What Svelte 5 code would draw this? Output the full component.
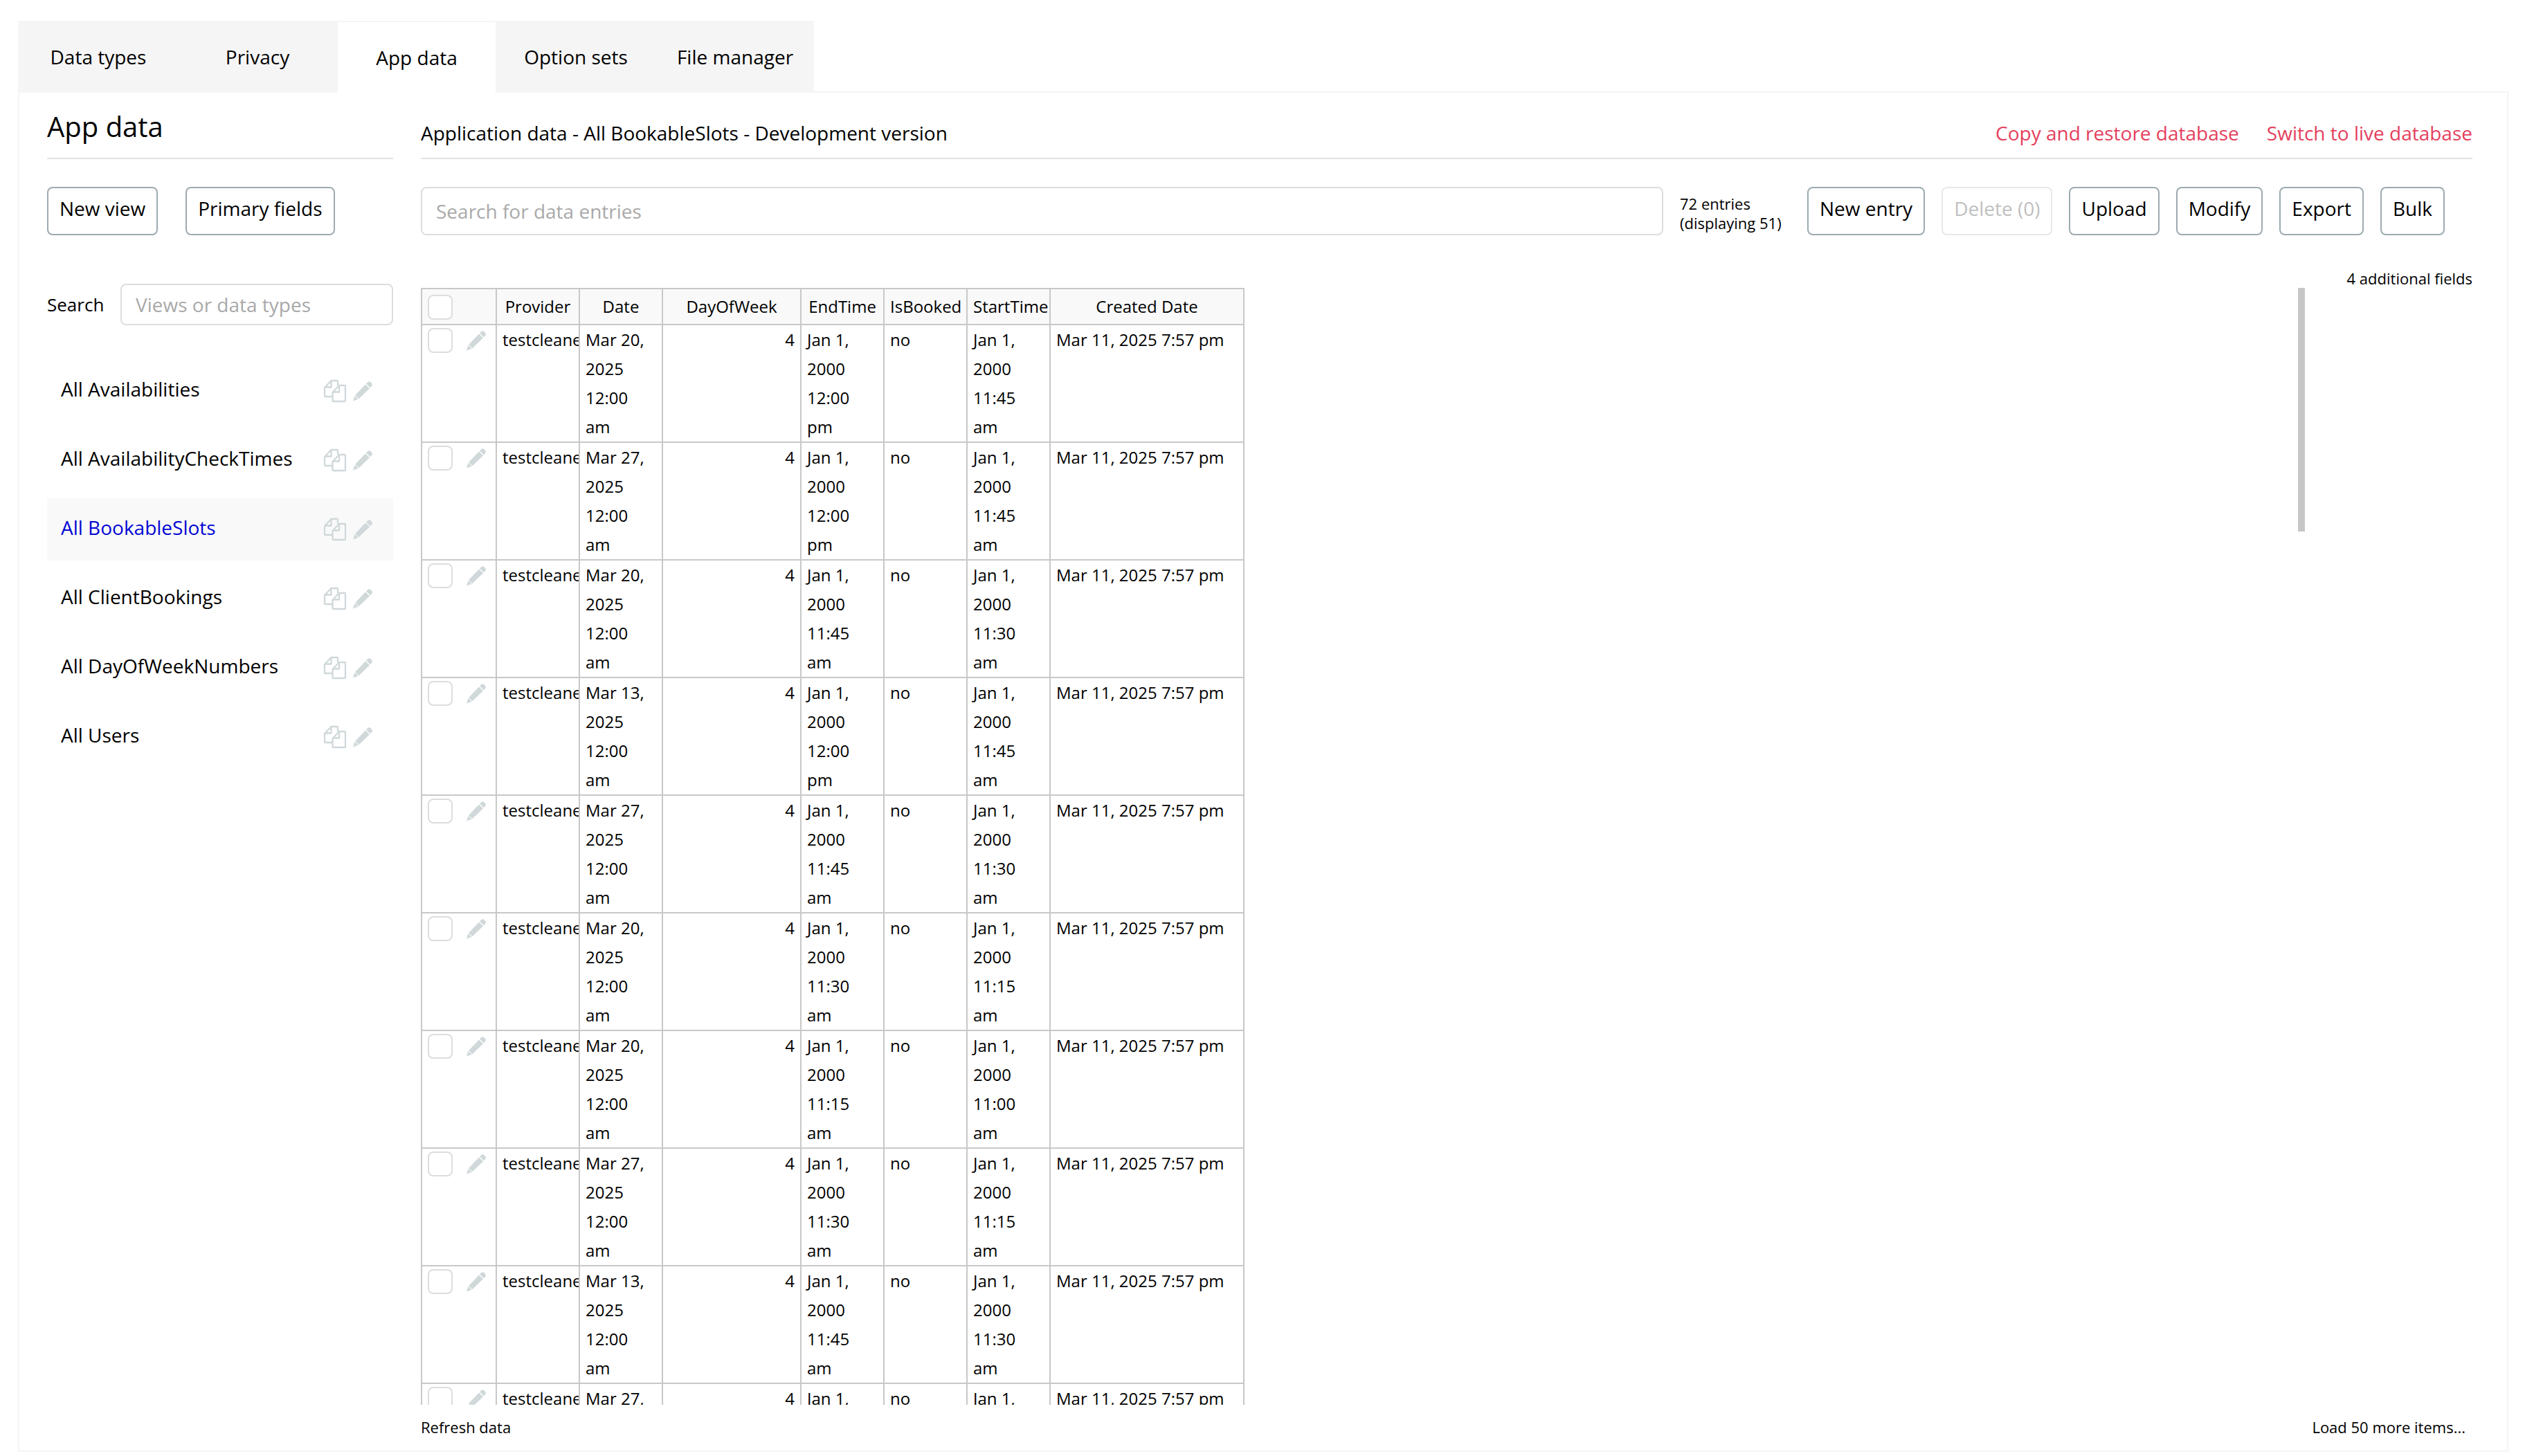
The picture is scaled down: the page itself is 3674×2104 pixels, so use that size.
<script>
  const tabs = ['Data types', 'Privacy', 'App data', 'Option sets', 'File manager'];
  const views = [
    'All Availabilities',
    'All AvailabilityCheckTimes',
    'All BookableSlots',
    'All ClientBookings',
    'All DayOfWeekNumbers',
    'All Users'
  ];
  const columns = [
    { name: 'Provider', size: 'narrow' },
    { name: 'Date', size: 'narrow' },
    { name: 'DayOfWeek', size: 'medium' },
    { name: 'EndTime', size: 'narrow' },
    { name: 'IsBooked', size: 'narrow' },
    { name: 'StartTime', size: 'narrow' },
    { name: 'Created Date', size: 'wide' }
  ];
  const actions = ['New entry', 'Delete (0)', 'Upload', 'Modify', 'Export', 'Bulk'];
  const slots = [
    ['20', '12:00 pm', '11:45 am'],
    ['27', '12:00 pm', '11:45 am'],
    ['20', '11:45 am', '11:30 am'],
    ['13', '12:00 pm', '11:45 am'],
    ['27', '11:45 am', '11:30 am'],
    ['20', '11:30 am', '11:15 am'],
    ['20', '11:15 am', '11:00 am'],
    ['27', '11:30 am', '11:15 am'],
    ['13', '11:45 am', '11:30 am'],
    ['27', '11:15 am', '11:00 am']
  ];
  let activeTab = $state('App data');
  let activeView = $state('All BookableSlots');
</script>

{#snippet pencil()}
  <svg class="pencil" viewBox="0 0 28 28" aria-hidden="true">
    <path d="M3.2 20 18 4.400 24 10.200 8.400 25.200Z" />
    <path d="M19 3.500 21.400 1.100Q23.400-.6 25.200 1.100L27.200 3.100Q28.800 5 27.200 6.800L24.900 9.200Z" />
    <path d="M2.600 20.800 7.600 25.800 0 28.400Z" />
  </svg>
{/snippet}

{#snippet copy()}
  <svg class="copy" viewBox="0 0 32 32" aria-hidden="true">
    <path d="M12 24H2Q1 24 1 23V11L10.500 1H19Q20 1 20 2V8M10.500 1V10.500H1" />
    <path d="M12.500 18 22 8H30Q31 8 31 9V30Q31 31 30 31H13.500Q12.500 31 12.500 30ZM22 8V17.500H12.500" />
  </svg>
{/snippet}

<div class="page">
  <nav class="tabs">
    {#each tabs as tab}
      <button class="tab" class:active={tab === activeTab} onclick={() => (activeTab = tab)}>{tab}</button>
    {/each}
  </nav>

  <div class="panel">
    <aside class="sidebar">
      <header class="heading"><h1>App data</h1></header>
      <div class="side-buttons">
        <button class="btn">New view</button>
        <button class="btn">Primary fields</button>
      </div>
      <div class="filter">
        <label for="view-search">Search</label>
        <input id="view-search" class="field" type="text" placeholder="Views or data types" />
      </div>
      <ul class="views">
        {#each views as view}
          <li class:selected={view === activeView}>
            <button class="view-name" onclick={() => (activeView = view)}>{view}</button>
            <button class="icon" aria-label="Copy {view}">{@render copy()}</button>
            <button class="icon" aria-label="Edit {view}">{@render pencil()}</button>
          </li>
        {/each}
      </ul>
    </aside>

    <main class="content">
      <header class="heading">
        <h2>Application data - All BookableSlots - Development version</h2>
        <div class="links">
          <a href="#copy">Copy and restore database</a>
          <a href="#live">Switch to live database</a>
        </div>
      </header>

      <div class="toolbar">
        <input class="field search" type="text" aria-label="Search for data entries" placeholder="Search for data entries" />
        <p class="count">72 entries<br />(displaying 51)</p>
        <div class="actions">
          {#each actions as action}
            <button class="btn" disabled={action === 'Delete (0)'}>{action}</button>
          {/each}
        </div>
      </div>

      <div class="extra"><a class="small" href="#fields">4 additional fields</a></div>

      <div class="grid">
        <div class="scroller">
          <table>
            <colgroup>
              <col class="tools-col" />
              {#each columns as column}<col class={column.size} />{/each}
            </colgroup>
            <thead>
              <tr>
                <th><input class="tick" type="checkbox" aria-label="Select all entries" /></th>
                {#each columns as column}<th>{column.name}</th>{/each}
              </tr>
            </thead>
            <tbody>
              {#each slots as [day, end, start], i}
                <tr>
                  <td>
                    <div class="tools">
                      <input class="tick" type="checkbox" aria-label="Select entry {i + 1}" />
                      <button class="icon" aria-label="Edit entry {i + 1}">{@render pencil()}</button>
                    </div>
                  </td>
                  <td class="clip">testcleane</td>
                  <td>Mar {day}, 2025 12:00 am</td>
                  <td class="number">4</td>
                  <td>Jan 1, 2000 {end}</td>
                  <td>no</td>
                  <td>Jan 1, 2000 {start}</td>
                  <td>Mar 11, 2025 7:57 pm</td>
                </tr>
              {/each}
            </tbody>
          </table>
        </div>
        <div class="thumb"></div>
      </div>

      <footer>
        <a class="small" href="#refresh">Refresh data</a>
        <a class="small more" href="#more">Load 50 more items...</a>
      </footer>
    </main>
  </div>
</div>

<style>
  :global(body) {
    background: #fff;
  }
  .page,
  .page * {
    box-sizing: border-box;
  }
  .page {
    display: flex;
    flex-direction: column;
    height: 100vh;
    padding: 30px 50px 6px 26px;
    font-family: 'Open Sans', 'Noto Sans', sans-serif;
    font-size: 28px;
    line-height: 38px;
    color: #000;
  }
  h1,
  h2,
  p,
  ul {
    margin: 0;
    padding: 0;
    font-weight: 400;
  }
  button,
  input {
    margin: 0;
    font: inherit;
    color: inherit;
  }
  button {
    padding: 0;
    border: 0;
    background: none;
  }
  a {
    text-decoration: none;
    color: inherit;
  }

  .tabs {
    display: flex;
    flex: none;
    height: 102px;
  }
  .tab {
    width: 230px;
    padding: 2px 0 0 2px;
    background: #f5f5f5;
    border: 2px solid #f5f5f5;
  }
  .tab.active {
    height: 104px;
    position: relative;
    padding: 0;
    background: #fff;
    border-bottom: 0;
    border-right: 0;
  }

  .panel {
    display: flex;
    flex: 1;
    min-height: 0;
    gap: 40px;
    padding: 0 50px 0 40px;
    border: 2px solid #f5f5f5;
  }
  .heading {
    display: flex;
    flex: none;
    align-items: flex-end;
    height: 96px;
    border-bottom: 2px solid #e2e2e2;
  }
  h1 {
    font-size: 40px;
    line-height: 56px;
    padding-bottom: 17px;
  }
  h2,
  .links {
    font-size: 28px;
    line-height: 38px;
    padding-bottom: 17px;
  }
  .links {
    display: flex;
    gap: 40px;
    margin-left: auto;
    color: #e43f5d;
  }

  .sidebar {
    flex: none;
    width: 500px;
  }
  .side-buttons {
    display: flex;
    gap: 40px;
    margin-top: 40px;
  }
  .btn {
    height: 70px;
    padding: 0 16px 8px;
    border: 2px solid #9daab0;
    border-radius: 8px;
    background: #fff;
    white-space: nowrap;
  }
  .btn:disabled {
    color: #bfbfbf;
    border-color: #e5e8e9;
  }
  .field {
    min-width: 0;
    padding: 0 20px;
    border: 2px solid #ddd;
    border-radius: 8px;
    background: #fff;
    outline: 0;
  }
  .field::placeholder {
    color: #a9a9a9;
    opacity: 1;
  }
  .filter {
    display: flex;
    align-items: center;
    justify-content: space-between;
    margin-top: 70px;
  }
  .filter label {
    font-size: 26px;
  }
  .filter .field {
    width: 394px;
    height: 60px;
  }
  .views {
    display: flex;
    flex-direction: column;
    gap: 10px;
    margin-top: 50px;
    list-style: none;
  }
  .views li {
    display: flex;
    align-items: center;
    gap: 10px;
    height: 90px;
    padding: 0 30px 0 20px;
  }
  .view-name {
    flex: 1;
    padding-bottom: 6px;
    text-align: left;
  }
  .selected {
    background: #f9f9f9;
  }
  .selected .view-name {
    color: #0205d3;
  }
  .icon {
    display: flex;
    flex: none;
  }
  .pencil {
    width: 28px;
    height: 28px;
    fill: #d0d8da;
    overflow: visible;
  }
  .copy {
    width: 32px;
    height: 32px;
    fill: none;
    stroke: #d0d8da;
    stroke-width: 2.3;
    stroke-linejoin: round;
    overflow: visible;
  }

  .content {
    display: flex;
    flex: 1;
    flex-direction: column;
    min-width: 0;
  }
  .toolbar {
    display: flex;
    flex: none;
    gap: 24px;
    padding: 40px 40px 0 0;
  }
  .search {
    flex: 1;
    height: 70px;
  }
  .count {
    flex: none;
    width: 160px;
    padding-top: 10px;
    font-size: 22px;
    line-height: 28px;
    white-space: nowrap;
  }
  .actions {
    display: flex;
    gap: 24px;
  }
  .small {
    font-size: 22px;
    line-height: 28px;
  }
  .extra {
    display: flex;
    flex: none;
    justify-content: flex-end;
    align-items: flex-end;
    height: 76px;
  }
  .grid {
    display: flex;
    flex: 1;
    min-height: 0;
    padding-right: 242px;
  }
  .scroller {
    flex: 1;
    overflow-y: auto;
    scrollbar-width: none;
  }
  .thumb {
    width: 10px;
    height: 352px;
    background: #c6c6c6;
  }
  table {
    width: 1190px;
    table-layout: fixed;
    border-collapse: collapse;
    font-size: 24px;
    line-height: 42px;
  }
  .tools-col {
    width: 108px;
  }
  .narrow {
    width: 120px;
  }
  .medium {
    width: 200px;
  }
  .wide {
    width: 280px;
  }
  th,
  td {
    padding: 0 8px;
    border: 2px solid #c8c8c8;
    vertical-align: top;
    text-align: left;
  }
  th {
    height: 52px;
    padding: 4px 8px;
    overflow: hidden;
    background: #f9f9f9;
    font-weight: 400;
    text-align: center;
  }
  th:first-child {
    padding-top: 8px;
    line-height: 0;
    text-align: left;
  }
  .clip {
    overflow: hidden;
    white-space: nowrap;
  }
  .number {
    text-align: right;
  }
  .tools {
    display: flex;
    align-items: center;
    gap: 20px;
    padding-top: 4px;
  }
  .tick {
    appearance: none;
    flex: none;
    width: 36px;
    height: 36px;
    border: 2px solid #ddd;
    border-radius: 8px;
    background: #fff;
  }
  footer {
    display: flex;
    flex: none;
    justify-content: space-between;
    height: 66px;
    padding: 18px 10px 0 0;
  }
</style>
